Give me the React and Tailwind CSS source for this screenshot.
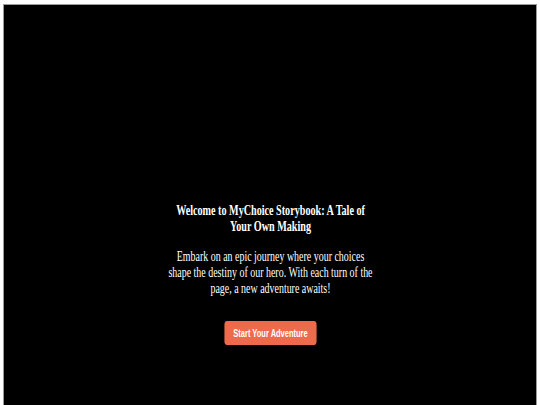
export default function App() {
  return (
    <div className="w-[540px] h-[405px] bg-white pt-[4px] px-[3px] overflow-hidden">
      <div className="h-[420px] bg-black border-t border-x border-[#9a9a9a] flex flex-col items-center pt-[197px]">
        <div className="w-[319px] shrink-0 scale-x-[0.663] flex flex-col items-center text-center text-white" style={{ fontFamily: '"Liberation Serif", serif' }}>
          <h1 className="text-[15.3px] leading-[15.5px] font-bold">Welcome to MyChoice Storybook: A Tale of Your Own Making</h1>
          <p className="mt-[15px] text-[15px] leading-[16px]">Embark on an epic journey where your choices shape the destiny of our hero. With each turn of the page, a new adventure awaits!</p>
          <button className="mt-[25px] bg-[#ee6a4c] text-white rounded-[4px] w-[139px] h-[24px] text-[11.3px] font-bold" style={{ fontFamily: '"Liberation Sans", sans-serif' }}>Start Your Adventure</button>
        </div>
      </div>
    </div>
  );
}
